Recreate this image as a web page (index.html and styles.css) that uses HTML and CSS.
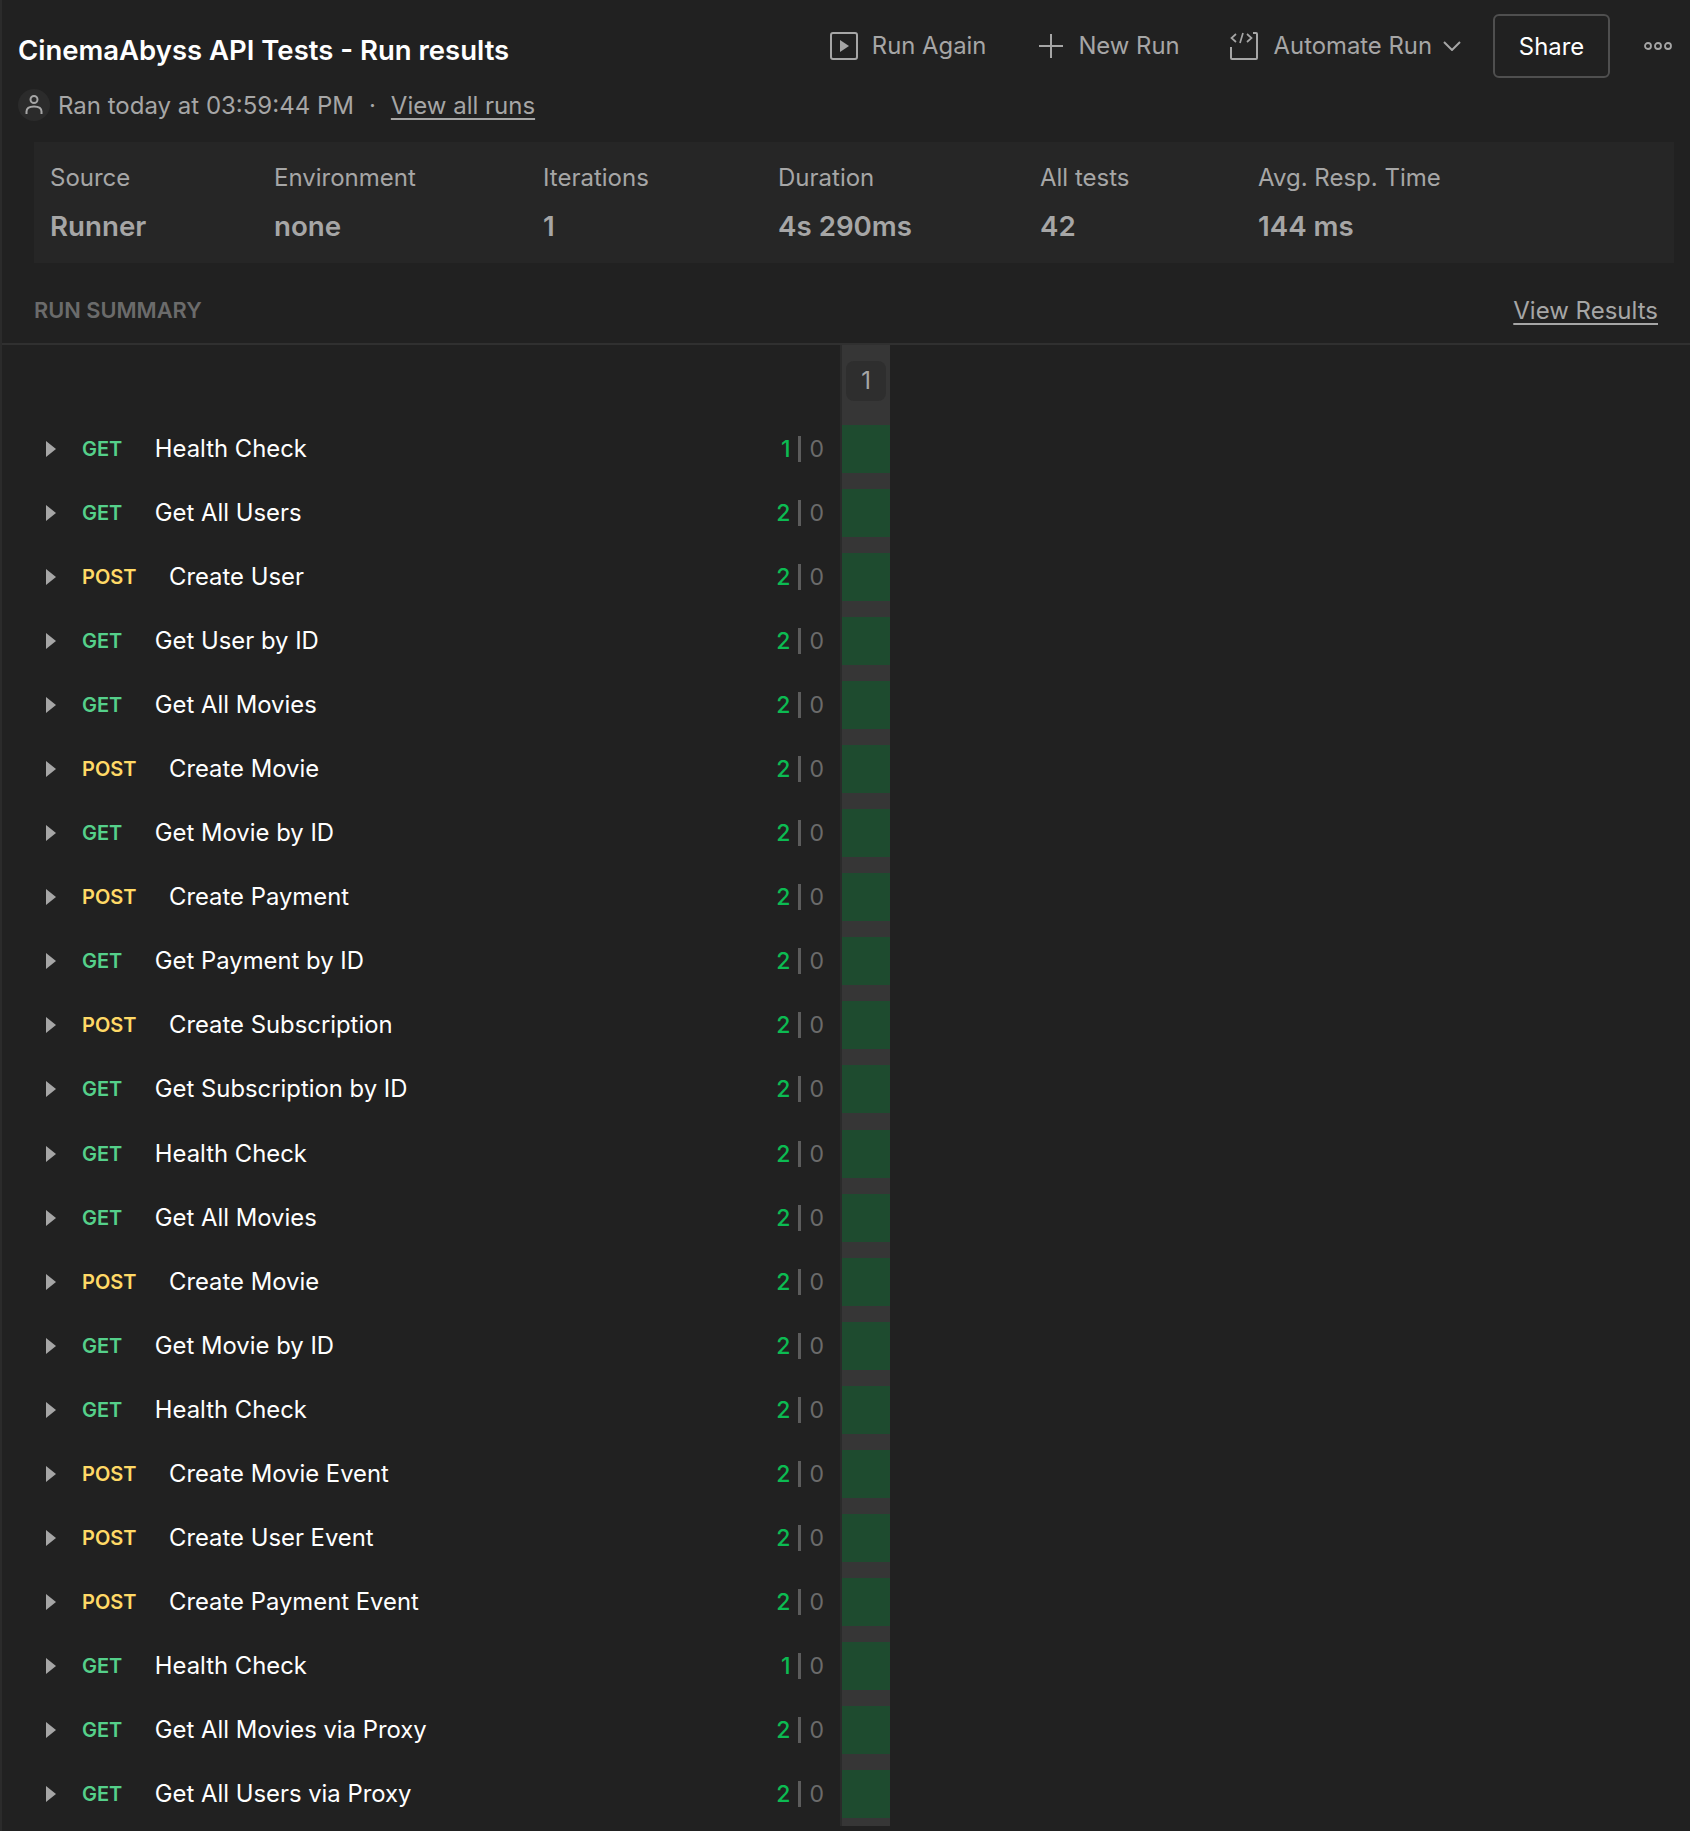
FILE: index.html
```html
<!DOCTYPE html>
<html lang="en">
<head>
  <meta charset="UTF-8">
  <title>CinemaAbyss API Tests - Run results</title>
  <link rel="stylesheet" href="styles.css">
</head>
<body>
  <div class="page">
    <!-- Title and actions -->
    <header class="top">
      <div class="top-left">
        <h1>CinemaAbyss API Tests - Run results</h1>
        <div class="meta">
          <span class="avatar">
            <svg width="20" height="24" viewBox="0 0 20 24" fill="none" stroke="#a6a6a6" stroke-width="2"><circle cx="10" cy="6.5" r="3.5"/><path d="M2.5 21v-2.5c0-3 2.5-5 7.500-5s7.500 2 7.500 5V21"/></svg>
          </span>
          <span>Ran today at 03:59:44 PM</span>
          <span class="dot">·</span>
          <a href="#">View all runs</a>
        </div>
      </div>
      <nav class="actions">
        <button class="action">
          <svg width="28" height="28" viewBox="0 0 28 28" fill="none" stroke="#a6a6a6" stroke-width="2"><rect x="1" y="1" width="26" height="26" rx="2"/><path d="M10 8l9 6-9 6z" fill="#a6a6a6" stroke="none"/></svg>
          Run Again
        </button>
        <button class="action">
          <svg width="28" height="28" viewBox="0 0 28 28" fill="none" stroke="#a6a6a6" stroke-width="2"><path d="M15 2v24M3 14h24"/></svg>
          New Run
        </button>
        <button class="action">
          <svg width="28" height="28" viewBox="0 0 28 28" fill="none" stroke="#a6a6a6" stroke-width="2"><path d="M1 15v11a1 1 0 0 0 1 1h24a1 1 0 0 0 1-1V2a1 1 0 0 0-1-1h-3"/><path d="M6 2L1.500 6 6 10M17 2l4.500 4L17 10M13 1l-3 10" stroke-width="1.700"/></svg>
          Automate Run
          <svg class="chev" width="18" height="10" viewBox="0 0 18 10" fill="none" stroke="#a6a6a6" stroke-width="2"><path d="M1 1l8 8 8-8"/></svg>
        </button>
        <button class="share">Share</button>
        <button class="more" aria-label="More">
          <svg width="28" height="10" viewBox="0 0 28 10" fill="none" stroke="#a6a6a6" stroke-width="1.800"><circle cx="4" cy="5" r="3"/><circle cx="14" cy="5" r="3"/><circle cx="24" cy="5" r="3"/></svg>
        </button>
      </nav>
    </header>

    <!-- Run stats -->
    <section class="stats">
      <div class="stat stat-source"><span>Source</span><b>Runner</b></div>
      <div class="stat stat-env"><span>Environment</span><b>none</b></div>
      <div class="stat stat-iter"><span>Iterations</span><b>1</b></div>
      <div class="stat stat-dur"><span>Duration</span><b>4s 290ms</b></div>
      <div class="stat stat-tests"><span>All tests</span><b>42</b></div>
      <div class="stat"><span>Avg. Resp. Time</span><b>144 ms</b></div>
    </section>

    <div class="summary-head">
      <span class="summary-title">RUN SUMMARY</span>
      <a href="#">View Results</a>
    </div>

    <!-- Requests -->
    <section class="runs">
      <div class="runs-head"><span class="iter-tag">1</span></div>
      <div class="row"><div class="req"><i class="caret"></i><span class="get">GET</span><span class="name">Health Check</span><span class="count"><em>1</em><u></u>0</span></div><div class="cell"><div class="pass"></div></div></div>
      <div class="row"><div class="req"><i class="caret"></i><span class="get">GET</span><span class="name">Get All Users</span><span class="count"><em>2</em><u></u>0</span></div><div class="cell"><div class="pass"></div></div></div>
      <div class="row"><div class="req"><i class="caret"></i><span class="post">POST</span><span class="name">Create User</span><span class="count"><em>2</em><u></u>0</span></div><div class="cell"><div class="pass"></div></div></div>
      <div class="row"><div class="req"><i class="caret"></i><span class="get">GET</span><span class="name">Get User by ID</span><span class="count"><em>2</em><u></u>0</span></div><div class="cell"><div class="pass"></div></div></div>
      <div class="row"><div class="req"><i class="caret"></i><span class="get">GET</span><span class="name">Get All Movies</span><span class="count"><em>2</em><u></u>0</span></div><div class="cell"><div class="pass"></div></div></div>
      <div class="row"><div class="req"><i class="caret"></i><span class="post">POST</span><span class="name">Create Movie</span><span class="count"><em>2</em><u></u>0</span></div><div class="cell"><div class="pass"></div></div></div>
      <div class="row"><div class="req"><i class="caret"></i><span class="get">GET</span><span class="name">Get Movie by ID</span><span class="count"><em>2</em><u></u>0</span></div><div class="cell"><div class="pass"></div></div></div>
      <div class="row"><div class="req"><i class="caret"></i><span class="post">POST</span><span class="name">Create Payment</span><span class="count"><em>2</em><u></u>0</span></div><div class="cell"><div class="pass"></div></div></div>
      <div class="row"><div class="req"><i class="caret"></i><span class="get">GET</span><span class="name">Get Payment by ID</span><span class="count"><em>2</em><u></u>0</span></div><div class="cell"><div class="pass"></div></div></div>
      <div class="row"><div class="req"><i class="caret"></i><span class="post">POST</span><span class="name">Create Subscription</span><span class="count"><em>2</em><u></u>0</span></div><div class="cell"><div class="pass"></div></div></div>
      <div class="row"><div class="req"><i class="caret"></i><span class="get">GET</span><span class="name">Get Subscription by ID</span><span class="count"><em>2</em><u></u>0</span></div><div class="cell"><div class="pass"></div></div></div>
      <div class="row"><div class="req"><i class="caret"></i><span class="get">GET</span><span class="name">Health Check</span><span class="count"><em>2</em><u></u>0</span></div><div class="cell"><div class="pass"></div></div></div>
      <div class="row"><div class="req"><i class="caret"></i><span class="get">GET</span><span class="name">Get All Movies</span><span class="count"><em>2</em><u></u>0</span></div><div class="cell"><div class="pass"></div></div></div>
      <div class="row"><div class="req"><i class="caret"></i><span class="post">POST</span><span class="name">Create Movie</span><span class="count"><em>2</em><u></u>0</span></div><div class="cell"><div class="pass"></div></div></div>
      <div class="row"><div class="req"><i class="caret"></i><span class="get">GET</span><span class="name">Get Movie by ID</span><span class="count"><em>2</em><u></u>0</span></div><div class="cell"><div class="pass"></div></div></div>
      <div class="row"><div class="req"><i class="caret"></i><span class="get">GET</span><span class="name">Health Check</span><span class="count"><em>2</em><u></u>0</span></div><div class="cell"><div class="pass"></div></div></div>
      <div class="row"><div class="req"><i class="caret"></i><span class="post">POST</span><span class="name">Create Movie Event</span><span class="count"><em>2</em><u></u>0</span></div><div class="cell"><div class="pass"></div></div></div>
      <div class="row"><div class="req"><i class="caret"></i><span class="post">POST</span><span class="name">Create User Event</span><span class="count"><em>2</em><u></u>0</span></div><div class="cell"><div class="pass"></div></div></div>
      <div class="row"><div class="req"><i class="caret"></i><span class="post">POST</span><span class="name">Create Payment Event</span><span class="count"><em>2</em><u></u>0</span></div><div class="cell"><div class="pass"></div></div></div>
      <div class="row"><div class="req"><i class="caret"></i><span class="get">GET</span><span class="name">Health Check</span><span class="count"><em>1</em><u></u>0</span></div><div class="cell"><div class="pass"></div></div></div>
      <div class="row"><div class="req"><i class="caret"></i><span class="get">GET</span><span class="name">Get All Movies via Proxy</span><span class="count"><em>2</em><u></u>0</span></div><div class="cell"><div class="pass"></div></div></div>
      <div class="row"><div class="req"><i class="caret"></i><span class="get">GET</span><span class="name">Get All Users via Proxy</span><span class="count"><em>2</em><u></u>0</span></div><div class="cell"><div class="pass"></div></div></div>
    </section>
  </div>
</body>
</html>
```

FILE: styles.css
```css
body {
  margin: 0;
  background: #212121;
  color: #a6a6a6;
  font-family: 'Inter', sans-serif;
  font-size: 23.85px;
  height: 1831px;
  overflow: hidden;
}

a {
  color: #a6a6a6;
  text-decoration: underline;
  text-underline-offset: 4px;
}

.page {
  border-left: 2px solid #2b2b2b;
}

.top {
  display: flex;
  justify-content: space-between;
  height: 142px;
  box-sizing: border-box;
  padding: 14px 18px 0 16px;
}

h1 {
  margin: 18px 0 0 0;
  font-size: 27.5px;
  line-height: 36px;
  font-weight: 600;
  color: #fff;
}

.meta {
  display: flex;
  align-items: center;
  margin-top: 19px;
  height: 36px;
  gap: 8px;
  font-size: 24px;
}

.avatar {
  display: flex;
  align-items: center;
  justify-content: center;
  width: 32px;
  height: 32px;
  border-radius: 50%;
  background: #2b2b2b;
}

.dot {
  margin: 0 7px;
}

.actions {
  display: flex;
  align-items: flex-start;
}

button {
  font: inherit;
  background: none;
  border: none;
  color: #a6a6a6;
  padding: 0;
}

.action {
  display: flex;
  align-items: center;
  gap: 14px;
  height: 63px;
  margin-right: 50px;
}

.chev {
  margin-left: -5px;
}

.action:nth-child(3) {
  gap: 16px;
  margin-right: 32px;
}

.share {
  width: 117px;
  height: 64px;
  border: 2px solid #4f4f4f;
  border-radius: 6px;
  color: #fff;
  margin-right: 34px;
}

.more {
  height: 63px;
  display: flex;
  align-items: center;
}

.stats {
  display: flex;
  margin: 0 16px 0 32px;
  height: 121px;
  box-sizing: border-box;
  padding: 20px 0 0 16px;
  background: #262626;
}

.stat {
  display: flex;
  flex-direction: column;
  gap: 16px;
}

.stat span {
  font-size: 24px;
  line-height: 32px;
}

.stat b {
  font-size: 27.7px;
  line-height: 32px;
  font-weight: 600;
}

.stat-source { width: 224px; }
.stat-env { width: 269px; }
.stat-iter { width: 235px; }
.stat-dur { width: 262px; }
.stat-tests { width: 218px; }

.summary-head {
  display: flex;
  justify-content: space-between;
  align-items: center;
  height: 82px;
  box-sizing: border-box;
  padding: 14px 32px 0 32px;
  border-bottom: 2px solid #303030;
  font-size: 24px;
}

.summary-title {
  font-size: 21.8px;
  font-weight: 600;
  color: #6b6b6b;
}

.runs {
  padding-bottom: 8px;
}

.runs-head {
  height: 72px;
  margin-left: 838px;
  width: 48px;
  background: #363636;
  border-left: 2px solid #2b2b2b;
  display: flex;
  justify-content: center;
}

.iter-tag {
  width: 40px;
  height: 40px;
  margin-top: 16px;
  border-radius: 8px;
  background: #2e2e2e;
  text-align: center;
  line-height: 40px;
}

.row {
  display: flex;
  height: 64.048px;
}

.req {
  display: flex;
  align-items: center;
  width: 838px;
  box-sizing: border-box;
  padding-left: 44px;
}

.caret {
  width: 0;
  height: 0;
  border-style: solid;
  border-width: 8px 0 8px 10px;
  border-color: transparent transparent transparent #a6a6a6;
  margin-right: 26px;
}

.get, .post {
  font-size: 20px;
  font-weight: 600;
  margin-right: 32.5px;
}

.get { color: #55d08a; }
.post { color: #ffd966; }

.name {
  color: #fff;
  flex: 1;
  line-height: 29px;
  padding-bottom: 1px;
}

.count {
  display: flex;
  align-items: center;
  color: #6b6b6b;
  padding-right: 16px;
  font-size: 23px;
}

.count em {
  font-style: normal;
  font-weight: 500;
  color: #0cbb52;
}

.count u {
  display: block;
  width: 3px;
  height: 26px;
  margin: 0 8px 0 8px;
  background: #5c5c5c;
}

.cell {
  width: 48px;
  background: #363636;
  border-left: 2px solid #2b2b2b;
}

.pass {
  height: 48px;
  margin-top: 8px;
  background: #1e4b2f;
}
```
